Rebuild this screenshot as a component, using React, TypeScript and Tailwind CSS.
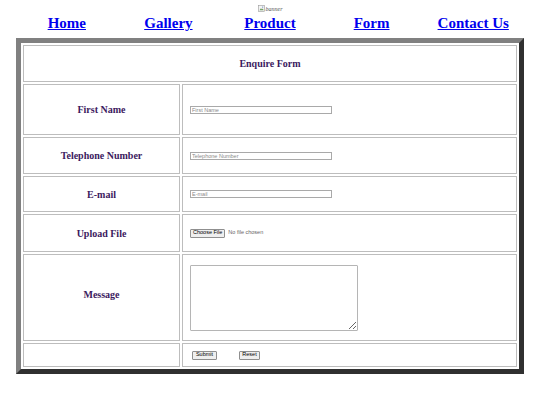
const serif = "font-['Liberation_Serif','Times_New_Roman',serif]";
const sans = "font-['Liberation_Sans',Arial,sans-serif]";

function Label({ text, extra = "" }: { text: string; extra?: string }) {
  return (
    <div className={`border border-[#bdbdbd] flex items-center justify-center ${serif} font-bold text-[10px] text-[#3b1a5e] ${extra}`}>
      {text}
    </div>
  );
}

function TextBox({ placeholder }: { placeholder: string }) {
  return (
    <input
      placeholder={placeholder}
      className={`w-[142px] h-[8px] border border-[#a9a9a9] px-[1px] ${sans} text-[5.5px] leading-none placeholder:text-[#8a8a8a] outline-none`}
    />
  );
}

function Cell({ children }: { children: React.ReactNode }) {
  return (
    <div className="border border-[#bdbdbd] flex items-center pl-[7px]">{children}</div>
  );
}

export default function App() {
  const links = ["Home", "Gallery", "Product", "Form", "Contact Us"];

  return (
    <div className="w-[540px] h-[405px] bg-white relative">
      {/* banner (broken image) */}
      <div className="flex justify-center pt-[4px] h-[13px]">
        <div className={`flex items-center gap-[1px] ${serif} text-[6px] leading-none text-[#555]`}>
          <svg width="7" height="7" viewBox="0 0 7 7">
            <rect x="0.5" y="0.5" width="6" height="6" fill="#f4f4f4" stroke="#9a9a9a" strokeWidth="0.6" />
            <path d="M1.5 5.2 L3 3.2 L4 4.4 L4.8 3.6 L5.6 5.2 Z" fill="#6a9a5a" />
            <circle cx="4.7" cy="2.1" r="0.6" fill="#5a7ec0" />
          </svg>
          <span className="italic">banner</span>
        </div>
      </div>

      {/* nav */}
      <nav className="mx-auto w-[508px] grid grid-cols-5 h-[25px] pt-[1px] items-start">
        {links.map((l) => (
          <a
            key={l}
            href="#"
            className={`text-center ${serif} font-bold text-[15px] leading-[18px] text-[#0000ee] underline`}
          >
            {l}
          </a>
        ))}
      </nav>

      {/* form table */}
      <div className="mx-auto w-[508px] border-[5px] border-t-[#808080] border-l-[#808080] border-r-[#303030] border-b-[#303030] p-[2px]">
        <div className="grid grid-cols-[157px_335px] grid-rows-[37px_51px_37px_36px_38px_87px_24px] gap-[2px]">
          <div className={`col-span-2 border border-[#bdbdbd] flex items-center justify-center ${serif} font-bold text-[10px] text-[#3b1a5e]`}>
            Enquire Form
          </div>

          <Label text="First Name" />
          <Cell>
            <TextBox placeholder="First Name" />
          </Cell>

          <Label text="Telephone Number" />
          <Cell>
            <TextBox placeholder="Telephone Number" />
          </Cell>

          <Label text="E-mail" />
          <Cell>
            <TextBox placeholder="E-mail" />
          </Cell>

          <Label text="Upload File" />
          <Cell>
            <div className={`flex items-center ${sans} text-[5.5px] leading-none`}>
              <span className="h-[9px] px-[2px] flex items-center border border-[#8f8f8f] rounded-[1px] bg-[#efefef] text-black">
                Choose File
              </span>
              <span className="ml-[3px] text-[#666]">No file chosen</span>
            </div>
          </Cell>

          <Label text="Message" extra="pb-[7px]" />
          <Cell>
            <textarea className="w-[168px] h-[66px] border border-[#b5b5b5] rounded-[1px] outline-none" />
          </Cell>

          <div className="border border-[#bdbdbd]" />
          <div className="border border-[#bdbdbd] flex items-center pl-[9px] gap-[22px]">
            <button className={`h-[9px] w-[25px] flex items-center justify-center border border-[#8f8f8f] rounded-[1px] bg-[#efefef] ${sans} text-[5.5px] leading-none text-black`}>
              Submit
            </button>
            <button className={`h-[9px] w-[21px] flex items-center justify-center border border-[#8f8f8f] rounded-[1px] bg-[#efefef] ${sans} text-[5.5px] leading-none text-black`}>
              Reset
            </button>
          </div>
        </div>
      </div>
    </div>
  );
}
